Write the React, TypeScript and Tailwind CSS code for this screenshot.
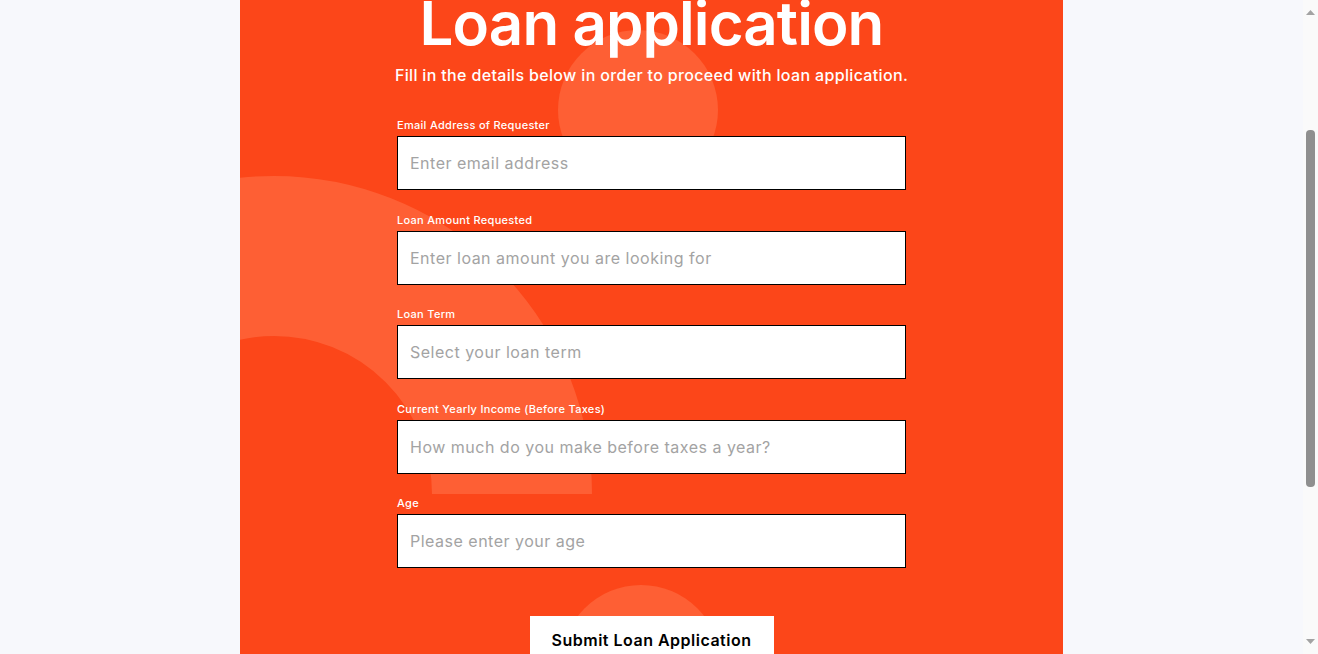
import { useLayoutEffect, useRef } from "react";

const FIELDS = [
  { label: "Email Address of Requester", placeholder: "Enter email address", type: "email" },
  { label: "Loan Amount Requested", placeholder: "Enter loan amount you are looking for", type: "text" },
  { label: "Loan Term", placeholder: "Select your loan term", type: "text" },
  { label: "Current Yearly Income (Before Taxes)", placeholder: "How much do you make before taxes a year?", type: "text" },
  { label: "Age", placeholder: "Please enter your age", type: "text" },
];

function ScrollBar() {
  return (
    <div className="flex h-screen w-[15px] shrink-0 flex-col items-center bg-[#fafafa]">
      <svg className="mt-[10px]" width="9" height="5" viewBox="0 0 9 5">
        <path d="M0 5 L4.5 0 L9 5 Z" fill="#a3a3a3" />
      </svg>
      <div className="mt-[115px] h-[357px] w-[9px] rounded-[4px] bg-[#8f8f8f]" />
      <svg className="mt-auto mb-[10px]" width="9" height="5" viewBox="0 0 9 5">
        <path d="M0 0 L4.5 5 L9 0 Z" fill="#a3a3a3" />
      </svg>
    </div>
  );
}

export default function App() {
  const scroller = useRef<HTMLDivElement>(null);

  // the capture shows the page scrolled down a bit
  useLayoutEffect(() => {
    if (scroller.current) scroller.current.scrollTop = 209;
  }, []);

  return (
    <div className="flex h-screen bg-[#f7f8fc] font-['Inter',sans-serif]">
      <div ref={scroller} className="h-screen flex-1 overflow-hidden">
        <div className="relative mx-auto w-[823px] overflow-hidden bg-[#fc4619] pt-[196px] pb-[266px]">
          {/* decorative shapes */}
          <div className="absolute left-[318px] top-[239px] h-[160px] w-[160px] rounded-full bg-[#fe5f34]" />
          <div className="absolute left-[-284px] top-[385px] h-[318px] w-[636px] overflow-hidden">
            <div className="h-[636px] w-[636px] rounded-full border-[160px] border-[#fe5f34]" />
          </div>
          <div className="absolute left-[321px] top-[794px] h-[160px] w-[160px] rounded-full bg-[#fe5f34]" />

          <div className="relative flex flex-col items-center">
            <h1 className="text-[60px] font-semibold leading-[72px] tracking-[-0.9px] text-white">
              Loan application
            </h1>
            <p className="mt-[4px] text-[16px] leading-[24px] font-medium tracking-[0.34px] text-white">
              Fill in the details below in order to proceed with loan application.
            </p>

            <form className="mt-[30px] flex w-[509px] flex-col gap-[21.5px]">
              {FIELDS.map((f) => (
                <label key={f.label} className="flex flex-col">
                  <span className="mb-[3px] text-[11px] leading-[16px] font-medium tracking-[0.3px] text-white">
                    {f.label}
                  </span>
                  <input
                    type={f.type}
                    placeholder={f.placeholder}
                    className="h-[54px] w-full border border-black bg-white px-[12px] text-[16px] tracking-[0.5px] text-black outline-none placeholder:text-[#a3a3a3]"
                  />
                </label>
              ))}
            </form>

            <button
              type="button"
              className="mt-[48px] h-[48px] w-[244px] bg-white text-[16px] font-semibold tracking-[0.5px] text-black"
            >
              Submit Loan Application
            </button>
          </div>
        </div>
      </div>
      <ScrollBar />
    </div>
  );
}
